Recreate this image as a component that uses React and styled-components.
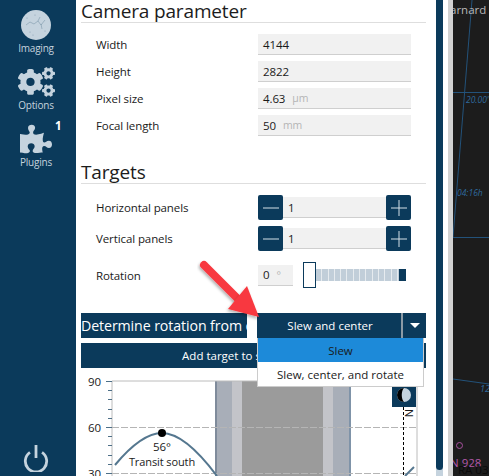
import styled, { createGlobalStyle } from 'styled-components';
import { FaCogs, FaPuzzlePiece } from 'react-icons/fa';

const navy = '#0b3a5b';
const pale = '#c5d3de';

const GlobalStyle = createGlobalStyle`
    html, body {
        margin: 0;
        padding: 0;
        background: #ffffff;
    }
    body {
        font-family: 'Open Sans', 'Noto Sans', sans-serif;
        color: #1a1a1a;
    }
`;

const Screen = styled.div`
    display: grid;
    grid-template-columns: 76px 360px 7px 10px 36px;
    width: 489px;
    height: 476px;
    overflow: hidden;
`;

const Sidebar = styled.nav`
    display: flex;
    flex-direction: column;
    justify-content: space-between;
    align-items: center;
    background: ${navy};
    color: ${pale};
    padding: 10px 4px 4px 0;
`;
const SideGroup = styled.div`
    display: flex;
    flex-direction: column;
    gap: 12px;
`;
const SideItem = styled.div`
    position: relative;
    display: flex;
    flex-direction: column;
    align-items: center;
    width: 72px;
    font-size: 10px;
    line-height: 14px;
    letter-spacing: -0.2px;
    svg {
        display: block;
        height: 30px;
        margin-bottom: 1px;
    }
`;
const Badge = styled.span`
    position: absolute;
    top: -5px;
    left: 55px;
    color: #ffffff;
    font-weight: 700;
    font-size: 11.5px;
`;

const Main = styled.main`
    display: flex;
    flex-direction: column;
    padding: 1px 10px 0 5px;
    overflow: hidden;
`;
const Heading = styled.h2`
    margin: ${props => props.first ? '0' : '26px 0 0'};
    height: 21px;
    line-height: 20px;
    font-size: 19px;
    font-weight: 400;
    letter-spacing: -0.15px;
    color: #1c1c1c;
    border-bottom: 1px solid #dedede;
`;
const FieldList = styled.div`
    display: flex;
    flex-direction: column;
    gap: 6px;
    margin-top: 11px;
    padding-left: 15px;
`;
const FieldRow = styled.div`
    display: grid;
    grid-template-columns: 162px 153px;
    align-items: center;
    margin-top: ${props => props.spaced ? '5px' : '0'};
    font-size: 11.5px;
    letter-spacing: -0.1px;
`;
const TextBox = styled.div`
    display: flex;
    align-items: center;
    gap: 7px;
    box-sizing: border-box;
    width: ${props => props.width || 'auto'};
    height: 21px;
    padding: 0 5px;
    background: #f1f1f1;
    border-bottom: 1px solid #cfcfcf;
    font-size: 11.5px;
`;
const Unit = styled.span`
    color: #b5b5b5;
    font-size: 10.5px;
`;
const Stepper = styled.div`
    display: grid;
    grid-template-columns: 25px 1fr 25px;
    align-items: center;
    height: 25px;
`;
const StepButton = styled.button`
    display: flex;
    align-items: center;
    justify-content: center;
    width: 25px;
    height: 25px;
    padding: 0;
    border: 0;
    border-radius: 2px;
    background: ${navy};
`;
const SliderWrap = styled.div`
    display: flex;
    align-items: center;
    height: 26px;
`;
const Handle = styled.div`
    box-sizing: border-box;
    width: 13px;
    height: 26px;
    margin-left: 10px;
    border: 1px solid ${navy};
    background: #ffffff;
`;
const Track = styled.div`
    width: 83px;
    height: 12px;
    background: repeating-linear-gradient(90deg, #c1ced9 0 5.3px, #e6ebef 5.3px 6.3px);
`;
const TrackEnd = styled.div`
    width: 7px;
    height: 12px;
    background: ${navy};
`;

const ActionRow = styled.div`
    display: flex;
    margin-top: 25px;
    height: 25px;
`;
const DetermineLabel = styled.div`
    box-sizing: border-box;
    width: 167px;
    margin-right: 10px;
    overflow: hidden;
    white-space: nowrap;
    background: ${navy};
    color: #ffffff;
    font-size: 14.2px;
    line-height: 25px;
    letter-spacing: -0.1px;
`;
const SplitButton = styled.div`
    position: relative;
    display: flex;
    gap: 2px;
    background: #8c9aa5;
`;
const SlewButton = styled.button`
    width: 144px;
    height: 25px;
    padding: 0 0 0 2px;
    border: 0;
    background: ${navy};
    color: #ffffff;
    font-family: inherit;
    font-size: 11.5px;
`;
const CaretButton = styled.button`
    display: flex;
    align-items: center;
    justify-content: center;
    width: 23px;
    height: 25px;
    padding: 0;
    border: 0;
    background: ${navy};
`;
const Caret = styled.span`
    width: 0;
    height: 0;
    border-left: 5px solid transparent;
    border-right: 5px solid transparent;
    border-top: 5px solid #ffffff;
`;
const Menu = styled.ul`
    position: absolute;
    z-index: 2;
    top: 25px;
    left: 0;
    width: 167px;
    box-sizing: border-box;
    margin: 0;
    padding: 0;
    list-style: none;
    background: #ffffff;
    border: 1px solid #cccccc;
    border-top: 0;
`;
const MenuItem = styled.li`
    height: 24px;
    line-height: 25px;
    text-align: center;
    font-size: 11.5px;
    background: ${props => props.active ? '#1d8ad9' : '#ffffff'};
`;
const AddButton = styled.button`
    width: 345px;
    height: 25px;
    margin-top: 5px;
    flex: none;
    padding: 0 18px 0 0;
    border: 0;
    background: ${navy};
    color: #ffffff;
    font-family: inherit;
    font-size: 11.5px;
`;
const ChartBox = styled.div`
    flex: none;
    height: 102px;
    margin-top: 6px;
    svg {
        display: block;
    }
`;

const ScrollBar = styled.div`
    background: ${pale};
`;
const ScrollThumb = styled.div`
    height: 470px;
    border-radius: 0 0 4px 4px;
    background: ${navy};
`;
const Gutter = styled.div`
    background: linear-gradient(90deg, #ffffff 0 5px, #d2d2d2 5px);
`;
const Sky = styled.div`
    background: #1c1c1c;
    svg {
        display: block;
    }
`;
const Pointer = styled.svg`
    position: absolute;
    z-index: 3;
    left: 190px;
    top: 250px;
`;

const minorTicks = [390, 399, 409, 418, 436, 445, 455, 464];

function ConstellationIcon() {
    return (
        <svg viewBox="0 0 30 30" width="30">
            <circle cx="15" cy="15" r="15" fill={pale} />
            <path d="M5 15l4-3 4 2 4-3 3 4 4-5M17 11l2-4M20 14l1 5" fill="none" stroke="#7e98ab" strokeWidth="0.6" />
            <g fill="#7e98ab">
                <circle cx="9" cy="22" r="0.5" />
                <circle cx="14" cy="5" r="0.5" />
                <circle cx="24" cy="21" r="0.5" />
                <circle cx="12" cy="25" r="0.5" />
                <circle cx="6" cy="8" r="0.5" />
            </g>
        </svg>
    );
}

function PowerIcon() {
    return (
        <svg viewBox="0 0 28 28" width="26" height="28">
            <path d="M7.5 8a11.5 11.5 0 1 0 13 0" fill="none" stroke={pale} strokeWidth="3" />
            <path d="M14 0v14" fill="none" stroke={pale} strokeWidth="3" />
        </svg>
    );
}

function StepIcon({plus}) {
    return (
        <svg viewBox="0 0 16 16" width="16" height="16">
            <path d={plus ? 'M0 8h16M8 0v16' : 'M0 8h16'} stroke="#d5e0e8" strokeWidth="1" />
        </svg>
    );
}

function StepperField({label}) {
    return (
        <FieldRow>
            <span>{label}</span>
            <Stepper>
                <StepButton><StepIcon /></StepButton>
                <TextBox>1</TextBox>
                <StepButton><StepIcon plus /></StepButton>
            </Stepper>
        </FieldRow>
    );
}

function AltitudeChart() {
    return (
        <svg viewBox="81 374 345 102" width="345" height="102" fontFamily="'Open Sans', sans-serif">
            <rect x="215" y="381" width="136" height="95" fill="#a8aeb8" />
            <rect x="215" y="381" width="2" height="95" fill="#7f8b9b" />
            <rect x="349" y="381" width="2" height="95" fill="#7f93a8" />
            <rect x="232" y="381" width="10" height="95" fill="#c3c4c9" />
            <rect x="242" y="381" width="81" height="95" fill="#9b9b9b" />
            <rect x="323" y="381" width="10" height="95" fill="#c3c4c9" />
            <path d="M112 381H417V476M112 381V476" fill="none" stroke="#bcbcbc" />
            <path d="M112 427.5H417M112 473.5H417" stroke="#b5b5b5" strokeDasharray="7 2" />
            <path d="M106 381.5H112M106 427.5H112M106 473.5H112" stroke="#4d6f87" />
            {minorTicks.map(y => <path key={y} d={`M108 ${y}.5H112`} stroke="#4d6f87" />)}
            <path d="M115 465C130 447 146 433 162 433C178 433 196 448 217 476" fill="none" stroke="#55778f" strokeWidth="2" />
            <path d="M405 476L414 467" fill="none" stroke="#55778f" strokeWidth="2" />
            <circle cx="162" cy="433" r="4" fill="#000000" />
            <path d="M403.5 407V476" stroke="#000000" strokeDasharray="3 2" />
            <rect x="392" y="387" width="24" height="20" fill={navy} />
            <circle cx="404" cy="395" r="7" fill={pale} />
            <path d="M404 388a7 7 0 0 0 0 14c-3-3-3-11 0-14z" fill="#000000" />
            <g fontSize="11.5" fill="#1a1a1a" letterSpacing="-0.1">
                <text x="101" y="385.5" textAnchor="end">90</text>
                <text x="101" y="431.5" textAnchor="end">60</text>
                <text x="101" y="477.5" textAnchor="end">30</text>
                <text x="162" y="451" textAnchor="middle">56°</text>
                <text x="162" y="466" textAnchor="middle" fontSize="11">Transit south</text>
                <text x="0" y="0" fontSize="11" transform="translate(405 409) rotate(90)">N</text>
            </g>
        </svg>
    );
}

function SkyMap() {
    return (
        <svg viewBox="453 0 36 476" width="36" height="476" fontFamily="'Open Sans', sans-serif">
            <path d="M472 0L453 237M453 92.5H489M453 237.5H489M453 379L489 384" fill="none" stroke="#23527a" strokeWidth="1" />
            <text x="450" y="14" fill="#b9b9b9" fontSize="11.5">arnard</text>
            <g fill="#2f6a9e" fontSize="8.5" fontStyle="italic">
                <text x="466" y="103">20.00'</text>
                <text x="457" y="196">04:16h</text>
                <text x="480" y="392" fontSize="9">12</text>
            </g>
            <circle cx="459.5" cy="445.5" r="3" fill="none" stroke="#a8519f" strokeWidth="1" />
            <text x="450" y="467" fill="#b359a8" fontSize="11.5">N 928</text>
            <text x="458" y="474" fill="#0a0a0a" fontSize="11.5">RA 03</text>
        </svg>
    );
}

export default function App() {
    return (<>
    <GlobalStyle />
    <Screen>
        <Sidebar>
            <SideGroup>
                <SideItem><ConstellationIcon />Imaging</SideItem>
                <SideItem><FaCogs size={37} />Options</SideItem>
                <SideItem>
                    <FaPuzzlePiece size={32} />Plugins
                    <Badge>1</Badge>
                </SideItem>
            </SideGroup>
            <PowerIcon />
        </Sidebar>
        <Main>
            <Heading first>Camera parameter</Heading>
            <FieldList>
                <FieldRow><span>Width</span><TextBox>4144</TextBox></FieldRow>
                <FieldRow><span>Height</span><TextBox>2822</TextBox></FieldRow>
                <FieldRow><span>Pixel size</span><TextBox>4.63<Unit>µm</Unit></TextBox></FieldRow>
                <FieldRow><span>Focal length</span><TextBox>50<Unit>mm</Unit></TextBox></FieldRow>
            </FieldList>
            <Heading>Targets</Heading>
            <FieldList>
                <StepperField label="Horizontal panels" />
                <StepperField label="Vertical panels" />
                <FieldRow spaced>
                    <span>Rotation</span>
                    <SliderWrap>
                        <TextBox width="35px">0<Unit>°</Unit></TextBox>
                        <Handle />
                        <Track />
                        <TrackEnd />
                    </SliderWrap>
                </FieldRow>
            </FieldList>
            <ActionRow>
                <DetermineLabel>Determine rotation from current</DetermineLabel>
                <SplitButton>
                    <SlewButton>Slew and center</SlewButton>
                    <CaretButton><Caret /></CaretButton>
                    <Menu>
                        <MenuItem active>Slew</MenuItem>
                        <MenuItem>Slew, center, and rotate</MenuItem>
                    </Menu>
                </SplitButton>
            </ActionRow>
            <AddButton>Add target to sequence</AddButton>
            <ChartBox><AltitudeChart /></ChartBox>
        </Main>
        <ScrollBar><ScrollThumb /></ScrollBar>
        <Gutter />
        <Sky><SkyMap /></Sky>
        <Pointer width="75" height="75" viewBox="190 250 75 75">
            <defs>
                <filter id="pointerShadow" x="-20%" y="-20%" width="140%" height="140%">
                    <feDropShadow dx="-1" dy="2" stdDeviation="1.5" floodColor="#000000" floodOpacity="0.3" />
                </filter>
            </defs>
            <path d="M204 265L238 299" stroke="#f8393f" strokeWidth="8" strokeLinecap="round" filter="url(#pointerShadow)" />
            <path d="M228 309L259 317L247 286Z" fill="#f8393f" filter="url(#pointerShadow)" />
        </Pointer>
    </Screen>
    </>);
}
